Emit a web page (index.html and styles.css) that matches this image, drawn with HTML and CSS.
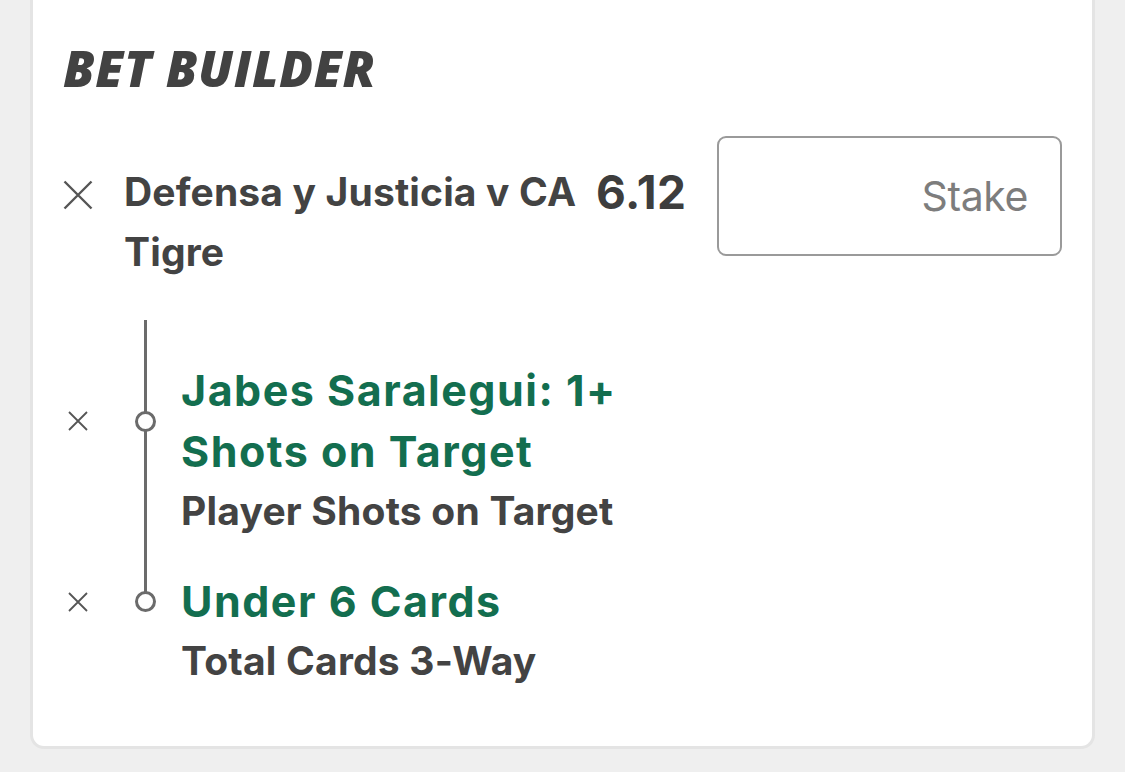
FILE: index.html
```html
<!DOCTYPE html>
<html lang="en">
<head>
<meta charset="utf-8">
<title>Bet Builder</title>
<link rel="stylesheet" href="styles.css">
</head>
<body>
<div class="card">
  <h2 class="title">BET BUILDER</h2>
  <div class="bet">
    <button class="close close-main" aria-label="Remove">
      <svg width="30" height="30" viewBox="0 0 30 30"><path d="M1.5 1.5 L28.5 28.5 M28.5 1.5 L1.5 28.5" stroke="#555" stroke-width="2.4" fill="none"/></svg>
    </button>
    <div class="event">Defensa y Justicia v CA Tigre</div>
    <div class="odds">6.12</div>
    <div class="stake">Stake</div>
  </div>
  <div class="legs">
    <div class="leg">
      <div class="leg-head">
        <button class="close close-leg" aria-label="Remove leg">
          <svg width="20" height="20" viewBox="0 0 20 20"><path d="M1 1 L19 19 M19 1 L1 19" stroke="#555" stroke-width="1.8" fill="none"/></svg>
        </button>
        <span class="marker"></span>
        <div class="selection">Jabes Saralegui: 1+ Shots on Target</div>
      </div>
      <div class="market">Player Shots on Target</div>
    </div>
    <div class="leg">
      <div class="leg-head">
        <button class="close close-leg" aria-label="Remove leg">
          <svg width="20" height="20" viewBox="0 0 20 20"><path d="M1 1 L19 19 M19 1 L1 19" stroke="#555" stroke-width="1.8" fill="none"/></svg>
        </button>
        <span class="marker"></span>
        <div class="selection">Under 6 Cards</div>
      </div>
      <div class="market">Total Cards 3-Way</div>
    </div>
  </div>
</div>
</body>
</html>
```

FILE: styles.css
```css
* { box-sizing: border-box; }
body {
  margin: 0;
  background: #efefef;
  font-family: Inter, "Noto Sans", sans-serif;
  color: #434343;
}
.card {
  margin: 0 30px;
  height: 749px;
  background: #fff;
  border: 3px solid #e4e4e4;
  border-top: none;
  border-radius: 0 0 14px 14px;
  padding: 0 30px;
}
.title {
  margin: 0;
  padding-top: 40px;
  font-family: "Open Sans", sans-serif;
  font-weight: 800;
  font-style: italic;
  font-size: 50px;
  line-height: 56px;
  letter-spacing: 0.6px;
  color: #424242;
}
.close {
  border: 0;
  background: none;
  padding: 0;
  display: flex;
  align-items: center;
  justify-content: center;
}
.bet {
  display: flex;
  align-items: flex-start;
  margin-top: 66px;
}
.close-main {
  width: 30px;
  height: 60px;
  margin-top: 3px;
}
.event {
  margin-left: 31px;
  width: 470px;
  font-size: 39px;
  font-weight: 700;
  line-height: 60px;
  letter-spacing: 0.15px;
}
.odds {
  margin-left: 2px;
  font-size: 46px;
  font-weight: 700;
  line-height: 60px;
  letter-spacing: 0.5px;
  color: #3d3d3d;
}
.stake {
  margin-left: auto;
  margin-top: -26px;
  width: 345px;
  height: 120px;
  border: 2.5px solid #9a9a9a;
  border-radius: 9px;
  display: flex;
  align-items: center;
  justify-content: flex-end;
  padding-right: 32px;
  font-size: 41px;
  font-weight: 400;
  color: #7d7d7d;
  letter-spacing: -0.4px;
}
.legs {
  position: relative;
  margin-top: 38px;
  padding-top: 40px;
}
.legs::before {
  content: "";
  position: absolute;
  left: 81px;
  top: 0;
  height: 280px;
  width: 3px;
  background: #6b6b6b;
}
.leg-head {
  display: flex;
  align-items: center;
}
.close-leg {
  width: 20px;
  height: 20px;
  margin-left: 5px;
}
.marker {
  position: relative;
  z-index: 1;
  width: 21px;
  height: 21px;
  border: 3px solid #6b6b6b;
  border-radius: 50%;
  background: #fff;
  margin-left: 47px;
}
.selection {
  margin-left: 25px;
  width: 470px;
  font-size: 43px;
  font-weight: 700;
  line-height: 61px;
  letter-spacing: 1.5px;
  color: #136e4f;
}
.market {
  margin-left: 118px;
  font-size: 39px;
  font-weight: 700;
  line-height: 58px;
  letter-spacing: 0.2px;
  margin-bottom: 33px;
}
.leg:last-child .leg-head { margin-top: -2px; }
```
